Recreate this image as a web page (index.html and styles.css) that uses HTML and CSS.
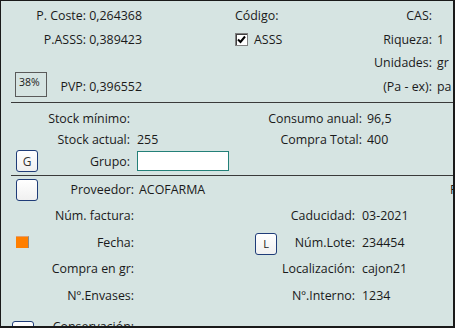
FILE: index.html
```html
<!DOCTYPE html>
<html lang="es">
<head>
    <meta charset="UTF-8">
    <meta name="viewport" content="width=device-width, initial-scale=1.0">
    <title>ficha producto</title>
    <link rel="stylesheet" href="styles.css">
</head>
<body>
<div class="form">

    <div class="sec-top">
        <div class="row top h24">
            <span class="lbl">P. Coste: 0,264368</span>
            <span></span>
            <span class="txt">Código:</span>
            <span class="lbl">CAS:</span>
            <span class="val"></span>
        </div>
        <div class="row top h24">
            <span class="lbl">P.ASSS: 0,389423</span>
            <span></span>
            <span class="txt"><span class="chk"><svg width="9" height="9" viewBox="0 0 9 9"><polyline points="1,4.5 3.5,7 8,1.5" fill="none" stroke="#000" stroke-width="2"/></svg></span>ASSS</span>
            <span class="lbl">Riqueza:</span>
            <span class="val">1</span>
        </div>
        <div class="row top h22">
            <span></span>
            <span></span>
            <span></span>
            <span class="lbl">Unidades:</span>
            <span class="val">gr</span>
        </div>
        <div class="row top h26">
            <span class="pvp"><span class="pct">38%</span><span>PVP: 0,396552</span></span>
            <span></span>
            <span></span>
            <span class="lbl">(Pa - ex):</span>
            <span class="val">pa</span>
        </div>
    </div>

    <div class="sep"></div>

    <div class="sec-mid">
        <div class="row mid h22">
            <span></span>
            <span class="lbl">Stock mínimo:</span>
            <span class="val val7"></span>
            <span class="lbl">Consumo anual:</span>
            <span class="val">96,5</span>
        </div>
        <div class="row mid h20">
            <span></span>
            <span class="lbl">Stock actual:</span>
            <span class="val val7">255</span>
            <span class="lbl">Compra Total:</span>
            <span class="val">400</span>
        </div>
        <div class="row mid h24">
            <span><span class="btn">G</span></span>
            <span class="lbl">Grupo:</span>
            <span class="val val7"><span class="input"></span></span>
            <span></span>
            <span></span>
        </div>
    </div>

    <div class="sep"></div>

    <div class="sec-low">
        <div class="row low h26">
            <span><span class="btn btn-top"></span></span>
            <span class="lbl">Proveedor:</span>
            <span class="val">ACOFARMA</span>
            <span></span>
            <span></span>
            <span class="val cut">P</span>
        </div>
        <div class="row low h27">
            <span></span>
            <span class="lbl">Núm. factura:</span>
            <span class="val"></span>
            <span></span>
            <span class="lbl">Caducidad:</span>
            <span class="val val7">03-2021</span>
        </div>
        <div class="row low h26">
            <span><span class="flag"></span></span>
            <span class="lbl">Fecha:</span>
            <span class="val"></span>
            <span><span class="btn btn-l">L</span></span>
            <span class="lbl">Núm.Lote:</span>
            <span class="val val7">234454</span>
        </div>
        <div class="row low h27">
            <span></span>
            <span class="lbl">Compra en gr:</span>
            <span class="val"></span>
            <span></span>
            <span class="lbl">Localización:</span>
            <span class="val val7">cajon21</span>
        </div>
        <div class="row low h27">
            <span></span>
            <span class="lbl">Nº.Envases:</span>
            <span class="val"></span>
            <span></span>
            <span class="lbl">Nº.Interno:</span>
            <span class="val val7">1234</span>
        </div>
        <div class="row low h27">
            <span><span class="btn btn-cons"></span></span>
            <span class="lbl">Conservación:</span>
            <span class="val"></span>
            <span></span>
            <span></span>
            <span></span>
        </div>
    </div>

</div>
</body>
</html>
```

FILE: styles.css
```css
body {
    margin: 0;
    font-family: "Open Sans", "Liberation Sans", sans-serif;
    font-size: 12.4px;
    color: #1a1a1a;
}

.form {
    width: 455px;
    height: 328px;
    box-sizing: border-box;
    border-top: 1px solid #1a1a1a;
    border-left: 1px solid #1a1a1a;
    border-right: 2px solid #1a1a1a;
    border-bottom: 2px solid #1a1a1a;
    background-color: #d6e4e2;
    overflow: hidden;
}

.sec-top {
    padding-top: 2px;
    padding-bottom: 3px;
}

.sec-mid {
    padding-top: 4px;
    padding-bottom: 2px;
}

.sep {
    height: 1px;
    margin-left: 10px;
    background-color: #3a3a3a;
}

.row {
    display: grid;
    align-items: center;
    white-space: nowrap;
}

.top {
    grid-template-columns: 141px 93px 125px 72px 21px;
}

.mid {
    grid-template-columns: 39px 90px 100px 132px 90px;
}

.low {
    grid-template-columns: 43px 90px 116px 32px 73px 97px;
}

.h20 { height: 20px; }
.h22 { height: 22px; }
.h24 { height: 24px; }
.h26 { height: 26px; }
.h27 { height: 27px; }

.lbl {
    text-align: right;
}

.val {
    padding-left: 5px;
}

.val7 {
    padding-left: 7px;
}

.cut {
    padding-left: 95px;
    color: #1a1a1a;
}

.txt {
    display: flex;
    align-items: center;
}

.chk {
    width: 13px;
    height: 13px;
    box-sizing: border-box;
    border: 1px solid #808080;
    box-shadow: inset 1px 1px 0 #404040;
    background-color: #fff;
    display: flex;
    align-items: center;
    justify-content: center;
    margin-right: 6px;
}

.pvp {
    display: flex;
    justify-content: space-between;
    align-items: center;
    padding-left: 14px;
}

.pct {
    width: 32px;
    height: 25px;
    box-sizing: border-box;
    border: 1px solid #5a5a5a;
    font-size: 10.5px;
    line-height: 18px;
    padding-left: 3px;
    margin-top: -3px;
}

.btn {
    width: 22px;
    height: 22px;
    box-sizing: border-box;
    margin-left: 15px;
    border: 1px solid #1f3c78;
    border-radius: 3px;
    background: linear-gradient(#ffffff, #f0f0f0);
    display: flex;
    align-items: center;
    justify-content: center;
    font-size: 12px;
    color: #333;
}

.btn-top {
    margin-top: 1px;
}

.btn-l {
    margin-left: 5px;
    margin-top: 3px;
    font-size: 11px;
    color: #222;
}

.btn-cons {
    margin-left: 11px;
    margin-top: 12px;
}

.input {
    display: block;
    width: 92px;
    height: 20px;
    box-sizing: border-box;
    border: 1px solid #238078;
    background-color: #fff;
}

.flag {
    display: block;
    width: 13px;
    height: 12px;
    box-sizing: border-box;
    margin-left: 15px;
    background-color: #ff7f00;
    border-right: 1px solid #8a8a8a;
    border-top: 1px solid #e0a070;
}
```
